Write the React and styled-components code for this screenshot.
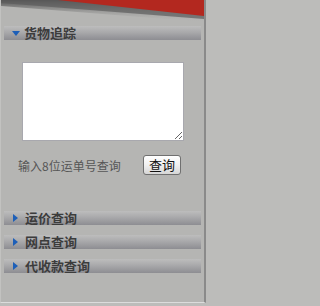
import React from 'react'
import styled, { createGlobalStyle } from 'styled-components'

const GlobalStyle = createGlobalStyle`
  body {
    margin: 0;
    background: #bcbcba;
    font-family: 'Liberation Sans', 'Noto Sans CJK SC', sans-serif;
  }
`

const Panel = styled.div`
  width: 203px;
  height: 302px;
  background: #b5b5b3;
  border-left: 1px solid #c2c2c0;
  border-right: 2px solid #8a8a8a;
  border-bottom: 1px solid #dcdcdc;
  display: flex;
  flex-direction: column;
`

const Banner = styled.div`
  height: 26px;
  svg {
    display: block;
  }
`

const Bar = styled.div`
  height: 14px;
  margin: ${({ gap }) => gap || 0}px 3px 0 3px;
  background: linear-gradient(#bdbdbd 0%, #a9a9ab 45%, #8d8d92 100%);
  display: flex;
  align-items: center;
  padding-left: 8px;
  gap: ${({ open }) => (open ? 4 : 7)}px;
`

const Arrow = styled.span`
  width: 0;
  height: 0;
  border-style: solid;
  border-color: transparent;
  ${({ open }) =>
    open
      ? `border-width: 5px 4px 0 4px; border-top-color: #1d5fb8;`
      : `border-width: 4px 0 4px 5px; border-left-color: #1d5fb8; margin-left: 1px;`}
`

const Title = styled.span`
  font-family: 'Noto Sans CJK SC', sans-serif;
  font-size: 13px;
  line-height: 14px;
  font-weight: 700;
  color: #3c3c3c;
`

const Body = styled.div`
  display: flex;
  flex-direction: column;
  padding: 22px 0 0 0;
`

const Box = styled.textarea`
  box-sizing: border-box;
  margin-left: 21px;
  width: 162px;
  height: 79px;
  border: 1px solid #a8a8ae;
  background: #fff;
  resize: both;
  padding: 2px;
`

const Row = styled.div`
  display: flex;
  align-items: center;
  margin-top: 14px;
  height: 20px;
  padding-left: 17px;
`

const Hint = styled.span`
  font-family: 'Noto Sans CJK SC', sans-serif;
  font-size: 12px;
  color: #565656;
  width: 125px;
`

const Button = styled.button`
  box-sizing: border-box;
  width: 38px;
  height: 20px;
  padding: 0;
  border: 1px solid #707070;
  border-radius: 3px;
  background: linear-gradient(#ffffff, #f0f0f0 50%, #d6d6d6);
  font-family: 'Noto Sans CJK SC', sans-serif;
  font-size: 13px;
  line-height: 16px;
  color: #111;
`

const Section = ({ title, open, gap }) => (
  <Bar open={open} gap={gap}>
    <Arrow open={open} />
    <Title>{title}</Title>
  </Bar>
)

export default function App() {
  return (
    <>
      <GlobalStyle />
      <Panel>
        <Banner>
          <svg width='203' height='26' viewBox='0 0 203 26'>
            <defs>
              <linearGradient id='shade' x1='0' y1='0' x2='0' y2='1'>
                <stop offset='0' stopColor='#4e4e4e' />
                <stop offset='1' stopColor='#b5b5b3' stopOpacity='0' />
              </linearGradient>
            </defs>
            <polygon points='0,0 203,0 203,22 0,6' fill='url(#shade)' />
            <polygon points='0,0 203,0 203,19 0,3' fill='#5c5c5c' opacity='0.7' />
            <polygon points='57,0 203,0 203,16' fill='#b3281f' />
          </svg>
        </Banner>
        <Section title='货物追踪' open />
        <Body>
          <Box />
          <Row>
            <Hint>输入8位运单号查询</Hint>
            <Button>查询</Button>
          </Row>
        </Body>
        <Section title='运价查询' gap={36} />
        <Section title='网点查询' gap={10} />
        <Section title='代收款查询' gap={10} />
      </Panel>
    </>
  )
}
